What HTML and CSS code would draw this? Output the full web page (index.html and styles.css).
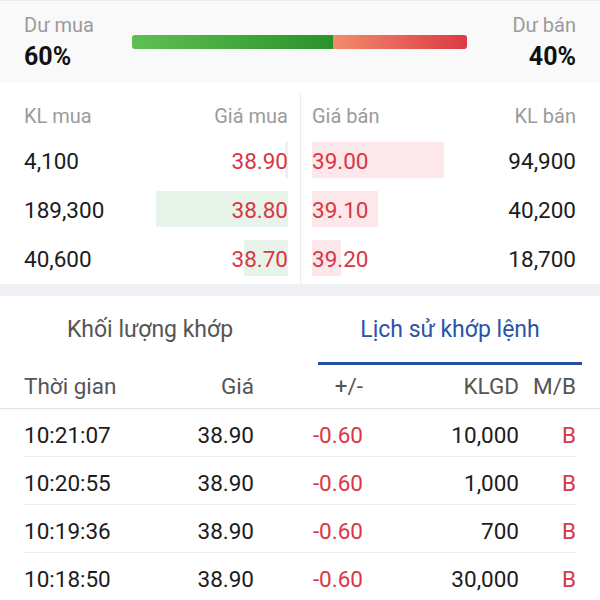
FILE: index.html
```html
<!DOCTYPE html>
<html>
<head>
    <title>Lịch sử khớp lệnh</title>
    <link rel="stylesheet" href="styles.css">
</head>
<body>
    <!-- Buy / sell pressure -->
    <div class="summary">
        <div class="summary-side">
            <div class="summary-label">Dư mua</div>
            <div class="summary-pct">60%</div>
        </div>
        <div class="ratio">
            <div class="ratio-buy" style="width: 60%"></div>
            <div class="ratio-sell"></div>
        </div>
        <div class="summary-side sell">
            <div class="summary-label">Dư bán</div>
            <div class="summary-pct">40%</div>
        </div>
    </div>

    <!-- Order book -->
    <div class="book">
        <div class="book-side bid">
            <div class="book-head"><span>KL mua</span><span>Giá mua</span></div>
            <div class="book-row"><i class="depth" style="width: 3px"></i><span>4,100</span><span class="price">38.90</span></div>
            <div class="book-row"><i class="depth" style="width: 132px"></i><span>189,300</span><span class="price">38.80</span></div>
            <div class="book-row"><i class="depth" style="width: 44px"></i><span>40,600</span><span class="price">38.70</span></div>
        </div>
        <div class="book-side ask">
            <div class="book-head"><span>Giá bán</span><span>KL bán</span></div>
            <div class="book-row"><i class="depth" style="width: 132px"></i><span class="price">39.00</span><span>94,900</span></div>
            <div class="book-row"><i class="depth" style="width: 66px"></i><span class="price">39.10</span><span>40,200</span></div>
            <div class="book-row"><i class="depth" style="width: 29px"></i><span class="price">39.20</span><span>18,700</span></div>
        </div>
    </div>

    <div class="gap"></div>

    <!-- Tabs -->
    <div class="tabs">
        <div class="tab">Khối lượng khớp</div>
        <div class="tab active">Lịch sử khớp lệnh</div>
    </div>

    <div class="trades-head">
        <span>Thời gian</span>
        <span class="num">Giá</span>
        <span class="num">+/-</span>
        <span class="num">KLGD</span>
        <span class="num">M/B</span>
    </div>

    <div class="trades-body">
        <div class="trade">
            <span>10:21:07</span>
            <span class="num">38.90</span>
            <span class="num down">-0.60</span>
            <span class="num">10,000</span>
            <span class="num down">B</span>
        </div>
        <div class="trade">
            <span>10:20:55</span>
            <span class="num">38.90</span>
            <span class="num down">-0.60</span>
            <span class="num">1,000</span>
            <span class="num down">B</span>
        </div>
        <div class="trade">
            <span>10:19:36</span>
            <span class="num">38.90</span>
            <span class="num down">-0.60</span>
            <span class="num">700</span>
            <span class="num down">B</span>
        </div>
        <div class="trade">
            <span>10:18:50</span>
            <span class="num">38.90</span>
            <span class="num down">-0.60</span>
            <span class="num">30,000</span>
            <span class="num down">B</span>
        </div>
    </div>
</body>
</html>
```

FILE: styles.css
```css
* {
    box-sizing: border-box;
}

body {
    margin: 0;
    width: 600px;
    background: #fff;
    color: #1c1c1c;
    font-family: Roboto, "Noto Sans", sans-serif;
}

/* Buy / sell pressure card */
.summary {
    display: flex;
    align-items: center;
    height: 83px;
    padding: 0 24px;
    background: #f9f9fa;
    border-top: 1px solid #ebebeb;
}

.summary-side {
    width: 108px;
}

.summary-side.sell {
    width: 109px;
    text-align: right;
}

.summary-label {
    font-size: 20px;
    line-height: 24px;
    color: #9b9b9b;
}

.summary-pct {
    margin-top: 5px;
    font-size: 25px;
    line-height: 30px;
    font-weight: 700;
    color: #111;
}

.ratio {
    flex: 1;
    display: flex;
    height: 14px;
    border-radius: 3px;
    overflow: hidden;
}

.ratio-buy {
    background: linear-gradient(90deg, #5ec053, #2a9229);
}

.ratio-sell {
    flex: 1;
    background: linear-gradient(90deg, #f28b6c, #dc3a45);
}

/* Order book */
.book {
    display: flex;
}

.book-side {
    width: 300px;
    margin-top: 10px;
}

.book-side.bid {
    padding: 0 12px 0 24px;
}

.book-side.ask {
    padding: 0 24px 0 11px;
    border-left: 1px solid #ececec;
}

.book-head {
    display: flex;
    justify-content: space-between;
    padding-top: 11px;
    margin-bottom: 9px;
    font-size: 20px;
    line-height: 24px;
    color: #9b9b9b;
}

.book-row {
    position: relative;
    display: flex;
    justify-content: space-between;
    height: 49px;
    line-height: 49px;
    font-size: 22.5px;
}

.book-row span {
    position: relative;
}

.depth {
    position: absolute;
    top: 5px;
    height: 36px;
}

.bid .depth {
    right: 0;
    background: #e8f4e9;
}

.ask .depth {
    left: 0;
    background: #fce8ea;
}

.price,
.down {
    color: #d93743;
}

.gap {
    height: 12px;
    background: #eff0f4;
}

/* Tabs */
.tabs {
    display: flex;
    gap: 36px;
    padding: 0 18px;
}

.tab {
    flex: 1;
    padding: 21px 0 20px;
    border-bottom: 3px solid transparent;
    text-align: center;
    font-size: 23px;
    line-height: 25px;
    color: #555;
}

.tab.active {
    color: #2a55a6;
    border-bottom-color: #2450a0;
}

/* Matched orders table */
.trades-head,
.trade {
    display: grid;
    grid-template-columns: 130px 100px 109px 156px 57px;
}

.trades-head {
    padding: 0 24px;
    font-size: 22.5px;
    line-height: 43px;
    color: #555;
    border-bottom: 1px solid #e6e6e6;
    box-shadow: 0 1px 2px rgba(0, 0, 0, 0.04);
}

.trades-body {
    padding: 0 24px;
}

.trade {
    padding-top: 6px;
    font-size: 22.5px;
    line-height: 41px;
    border-bottom: 1px solid #eeeeee;
}

.num {
    text-align: right;
}
```
